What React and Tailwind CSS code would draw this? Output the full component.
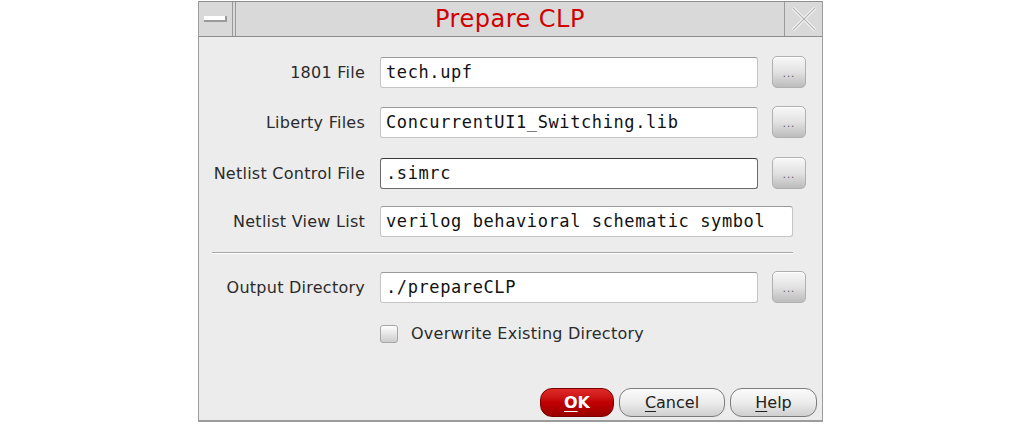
import React from 'react';

const sans = { fontFamily: '"DejaVu Sans", Verdana, sans-serif' };
const mono = { fontFamily: '"DejaVu Sans Mono", "Liberation Mono", monospace' };

const BrowseButton = () => (
    <button className="w-[34px] h-[32px] shrink-0 rounded-[5px] border border-[#b0b0b0] bg-gradient-to-b from-[#f8f8f8] via-[#e2e2e2] to-[#bcbcbc] flex items-end justify-center pb-[8px] shadow-[inset_0_1px_0_#ffffff]">
        <span className="text-[10px] leading-none text-[#5a5a5a] tracking-[1px]">...</span>
    </button>
);

const TextField = ({ value, focused, wide }) => (
    <div
        className={`${wide ? 'w-[413px]' : 'w-[378px]'} h-[31px] shrink-0 rounded-[3px] bg-white flex items-center px-[5px] border ${focused ? 'border-[#6a6a6a] border-t-[#3c3c3c]' : 'border-[#c4c4c4] border-t-[#9a9a9a]'}`}
    >
        <span style={mono} className="text-[17px] tracking-[0.6px] text-[#111] whitespace-nowrap leading-none">{value}</span>
    </div>
);

const Row = ({ label, value, focused, wide, browse = true, className = '' }) => (
    <div className={`flex items-start ${className}`}>
        <div className="w-[181px] h-[31px] flex items-center justify-end pr-[15px] shrink-0">
            <span className="text-[16px] tracking-[0.25px] text-[#2b2b2b] whitespace-nowrap">{label}</span>
        </div>
        <TextField value={value} focused={focused} wide={wide} />
        {browse && <div className="ml-[14px] -mt-[1px]"><BrowseButton /></div>}
    </div>
);

export default function App() {
    return (
        <div className="min-h-screen bg-white" style={sans}>
            <div className="ml-[198px] mt-[1px] w-[625px] h-[421px] border-x border-b-2 border-[#9c9c9c] bg-[#ececec] flex flex-col">
                {/* Title bar */}
                <div className="h-[36px] flex border-t border-b border-[#8e8e8e] bg-[#d9d9d9] shrink-0">
                    <div className="w-[34px] border-r border-[#9a9a9a] flex items-center justify-center">
                        <div className="w-[23px] h-[6px] bg-white border-r-2 border-b-2 border-[#9a9a9a]" />
                    </div>
                    <div className="flex-1 ml-[2px] border-x border-[#9a9a9a] flex items-center justify-center">
                        <span className="text-[24px] tracking-[0.5px] text-[#d00000] leading-none pb-[1px]">Prepare CLP</span>
                    </div>
                    <div className="w-[36px] ml-[1px] flex items-center justify-center">
                        <svg width="26" height="26" viewBox="0 0 26 26">
                            <path d="M2 2 L24 24 M24 2 L2 24" stroke="#ffffff" strokeWidth="3" />
                            <path d="M2 2 L24 24 M24 2 L2 24" stroke="#b4b4b4" strokeWidth="1.2" />
                        </svg>
                    </div>
                </div>

                {/* Body */}
                <div className="flex flex-col">
                    <Row className="mt-[20px]" label="1801 File" value="tech.upf" />
                    <Row className="mt-[19px]" label="Liberty Files" value="ConcurrentUI1_Switching.lib" />
                    <Row className="mt-[20px]" label="Netlist Control File" value=".simrc" focused />
                    <Row className="mt-[17px]" label="Netlist View List" value="verilog behavioral schematic symbol" wide browse={false} />

                    <div className="mt-[15px] ml-[13px] w-[581px] h-[2px] border-t border-[#a8a8a8] border-b border-b-white" />

                    <Row className="mt-[18px]" label="Output Directory" value="./prepareCLP" />

                    <div className="mt-[19px] ml-[181px] flex items-center">
                        <div className="w-[18px] h-[18px] rounded-[3px] border border-[#a6a6a6] bg-gradient-to-b from-white to-[#cccccc]" />
                        <span className="ml-[13px] text-[16px] tracking-[0.25px] text-[#2b2b2b]">Overwrite Existing Directory</span>
                    </div>
                </div>

                {/* Buttons */}
                <div className="mt-auto mb-[3px] flex justify-end pr-[5px] gap-[5px]">
                    <button className="w-[74px] h-[29px] rounded-[12px] bg-gradient-to-b from-[#e02a2a] via-[#c00000] to-[#9a0000] border border-[#7a0000] text-white font-bold text-[16px] flex items-center justify-center">
                        <span className="underline underline-offset-[3px]">O</span>K
                    </button>
                    <button className="w-[106px] h-[29px] rounded-[12px] bg-gradient-to-b from-[#fbfbfb] via-[#ececec] to-[#cfcfcf] border border-[#7c7c7c] text-[#222] text-[16px] flex items-center justify-center">
                        <span className="underline underline-offset-[3px]">C</span>ancel
                    </button>
                    <button className="w-[87px] h-[29px] rounded-[12px] bg-gradient-to-b from-[#fbfbfb] via-[#ececec] to-[#cfcfcf] border border-[#7c7c7c] text-[#222] text-[16px] flex items-center justify-center">
                        <span className="underline underline-offset-[3px]">H</span>elp
                    </button>
                </div>
            </div>
        </div>
    );
}
